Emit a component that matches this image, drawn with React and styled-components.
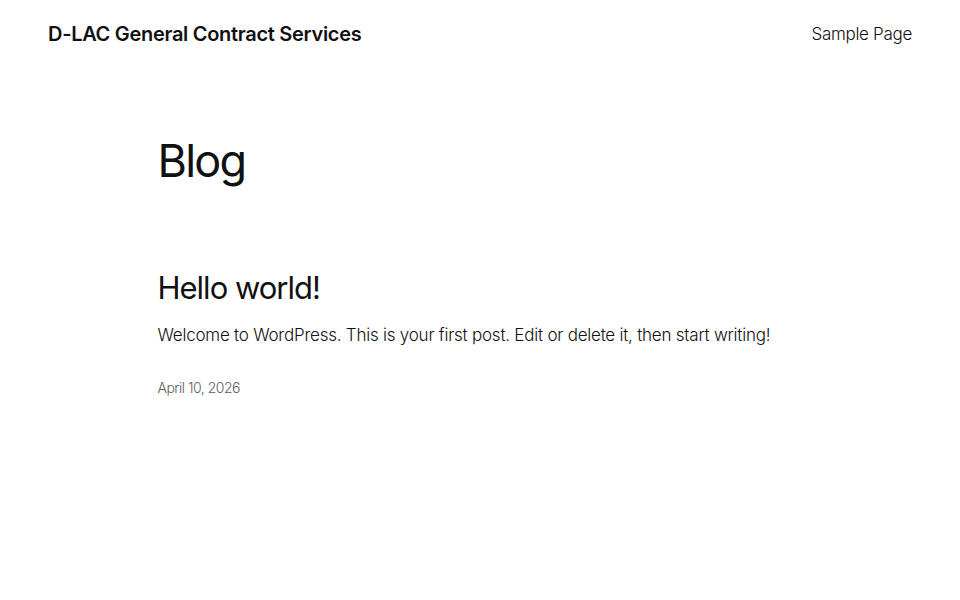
import React from 'react'
import styled, { createGlobalStyle } from 'styled-components'

const GlobalStyle = createGlobalStyle`
  html, body { margin: 0; padding: 0; background: #fff; }
  body {
    font-family: Inter, "Noto Sans", sans-serif;
    color: #111111;
    -webkit-font-smoothing: antialiased;
  }
`

const Page = styled.div`
  width: 960px;
  min-height: 600px;
  display: flex;
  flex-direction: column;
`

const Header = styled.header`
  display: flex;
  align-items: center;
  justify-content: space-between;
  padding: 0 48px;
  height: 68px;
`

const SiteTitle = styled.a`
  font-size: 20px;
  font-weight: 600;
  letter-spacing: -0.3px;
  color: #111;
  text-decoration: none;
`

const NavLink = styled.a`
  font-size: 17px;
  font-weight: 300;
  letter-spacing: -0.3px;
  color: #111;
  text-decoration: none;
`

const Main = styled.main`
  width: 645px;
  margin: 0 auto;
  display: flex;
  flex-direction: column;
`

const PageTitle = styled.h1`
  margin: 66px 0 0;
  font-size: 45px;
  font-weight: 400;
  letter-spacing: -1.8px;
  line-height: 1.2;
`

const PostTitle = styled.h2`
  margin: 81px 0 0;
  font-size: 31px;
  font-weight: 400;
  letter-spacing: -1px;
  line-height: 1.2;
`

const Excerpt = styled.p`
  margin: 17px 0 0;
  font-size: 17px;
  font-weight: 300;
  letter-spacing: -0.23px;
  line-height: 1.5;
`

const PostDate = styled.time`
  margin-top: 30px;
  font-size: 14px;
  font-weight: 300;
  color: #5e5e5e;
  letter-spacing: -0.5px;
`

export default function App() {
  return (
    <Page>
      <GlobalStyle />
      <Header>
        <SiteTitle href="#">D-LAC General Contract Services</SiteTitle>
        <NavLink href="#">Sample Page</NavLink>
      </Header>
      <Main>
        <PageTitle>Blog</PageTitle>
        <PostTitle>Hello world!</PostTitle>
        <Excerpt>Welcome to WordPress. This is your first post. Edit or delete it, then start writing!</Excerpt>
        <PostDate>April 10, 2026</PostDate>
      </Main>
    </Page>
  )
}
